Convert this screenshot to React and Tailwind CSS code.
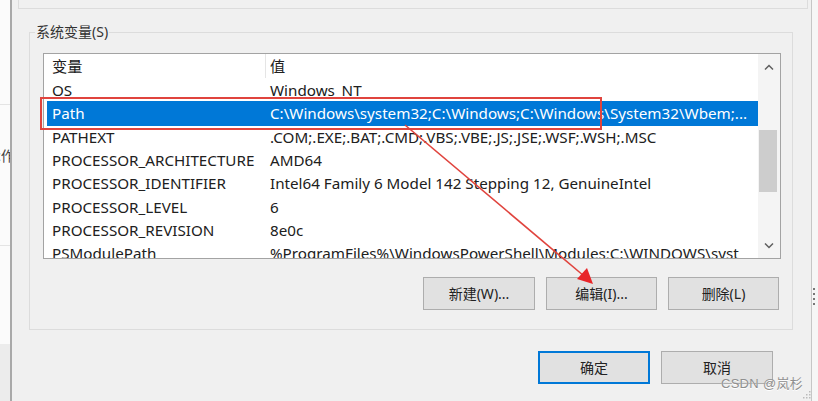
import React from "react";

const rows = [
  ["OS", "Windows_NT"],
  ["Path", "C:\\Windows\\system32;C:\\Windows;C:\\Windows\\System32\\Wbem;..."],
  ["PATHEXT", ".COM;.EXE;.BAT;.CMD;.VBS;.VBE;.JS;.JSE;.WSF;.WSH;.MSC"],
  ["PROCESSOR_ARCHITECTURE", "AMD64"],
  ["PROCESSOR_IDENTIFIER", "Intel64 Family 6 Model 142 Stepping 12, GenuineIntel"],
  ["PROCESSOR_LEVEL", "6"],
  ["PROCESSOR_REVISION", "8e0c"],
  ["PSModulePath", "%ProgramFiles%\\WindowsPowerShell\\Modules;C:\\WINDOWS\\syst"],
];

function Btn({ children, focused, w = "w-[112px]" }) {
  return (
    <button
      className={
        "h-[33px] " +
        w +
        " bg-[#e1e1e1] text-[14px] text-[#222] " +
        (focused ? "border-2 border-[#0078d7]" : "border border-[#adadad]")
      }
    >
      {children}
    </button>
  );
}

export default function App() {
  return (
    <div className="relative flex h-[401px] w-[818px] overflow-hidden bg-[#f0f0f0] font-['Noto_Sans','Noto_Sans_CJK_SC',sans-serif] text-[#1a1a1a]">
      {/* window behind, left edge */}
      <div className="flex w-[12px] shrink-0 flex-col border-r-2 border-[#a9a9a9] bg-[#fbfbfb]">
        <div className="h-[105px] overflow-hidden border-b border-[#e4e4e4]">
          <div className="-ml-[6px] mt-[5px] text-[13px] text-[#3a6fb0]">t</div>
        </div>
        <div className="h-[141px] overflow-hidden border-b border-[#e4e4e4]">
          <div className="-ml-[6px] mt-[40px] whitespace-nowrap text-[14px] text-[#444]">c作</div>
        </div>
        <div className="h-[98px]" />
        <div className="flex-1 bg-[#ececec]" />
      </div>

      {/* dialog */}
      <div className="flex min-w-0 flex-1 flex-col">
        <div className="ml-[6px] mr-[3px] h-[9px] border border-t-0 border-[#dcdcdc]" />

        {/* system variables group */}
        <div className="relative ml-[17px] mr-[18px] mt-[23px] border border-[#dcdcdc] pb-[19px] pl-[13px] pr-[11px] pt-[20px]">
          <div className="absolute -top-[11px] left-[5px] bg-[#f0f0f0] px-[1px] text-[14px] leading-[20px] text-[#333]">
            系统变量(S)
          </div>

          <div className="flex h-[206px] border border-[#a3a3a3] bg-white">
            <div className="min-w-0 flex-1 overflow-hidden pl-[3px] text-[15.2px] text-[#202020]">
              <div className="flex h-[24px] items-center">
                <div className="w-[218px] shrink-0 pl-[5px]">变量</div>
                <div className="h-full border-l border-[#e5e5e5] pl-[4px] leading-[24px]">值</div>
              </div>
              <div className="pt-[1px]">
                {rows.map(([name, value], i) => (
                  <div
                    key={name}
                    className={
                      "flex h-[23.3px] items-center whitespace-nowrap " +
                      (i === 1 ? "-mt-[1px] h-[24.3px] bg-[#0078d7] text-white" : "")
                    }
                  >
                    <div className="w-[218px] shrink-0 pl-[5px]">{name}</div>
                    <div className="pl-[5px]">{value}</div>
                  </div>
                ))}
              </div>
            </div>

            {/* scrollbar */}
            <div className="flex w-[22px] shrink-0 flex-col bg-[#f4f4f4]">
              <div className="flex h-[26px] items-center justify-center">
                <svg width="10" height="6" viewBox="0 0 10 6">
                  <path d="M1 5.5 L5 1.5 L9 5.5" fill="none" stroke="#606060" strokeWidth="1.5" />
                </svg>
              </div>
              <div className="ml-[1px] mr-[3px] mt-[50px] h-[62px] bg-[#cdcdcd]" />
              <div className="flex-1" />
              <div className="flex h-[24px] items-center justify-center">
                <svg width="10" height="6" viewBox="0 0 10 6">
                  <path d="M1 0.5 L5 4.5 L9 0.5" fill="none" stroke="#606060" strokeWidth="1.5" />
                </svg>
              </div>
            </div>
          </div>

          <div className="mr-[2px] mt-[18px] flex justify-end gap-[11px]">
            <Btn>新建(W)...</Btn>
            <Btn w="w-[111px]">编辑(I)...</Btn>
            <Btn w="w-[111px]">删除(L)</Btn>
          </div>
        </div>

        <div className="mr-[38px] mt-[21px] flex justify-end gap-[11px]">
          <Btn focused>确定</Btn>
          <Btn>取消</Btn>
        </div>
      </div>

      {/* right edge */}
      <div className="flex w-[7px] shrink-0 flex-col border-l border-[#c6c6c6] bg-[#f6f6f6]">
        <div className="mt-[288px] flex flex-col gap-[3px] pl-[1px]">
          <div className="h-[2px] w-[2px] bg-[#777]" />
          <div className="h-[2px] w-[2px] bg-[#777]" />
          <div className="h-[2px] w-[2px] bg-[#777]" />
          <div className="h-[2px] w-[2px] bg-[#777]" />
        </div>
      </div>

      {/* annotation overlay */}
      <svg className="pointer-events-none absolute left-0 top-0" width="818" height="401" viewBox="0 0 818 401">
        <rect x="41" y="98" width="560" height="31" fill="none" stroke="#e0443e" strokeWidth="2" />
        <line x1="405" y1="125" x2="584" y2="276" stroke="#e0443e" strokeWidth="1.6" />
        <polygon points="593,284 577,279 587,268" fill="#e8262a" />
      </svg>

      {/* resize grip */}
      <svg className="pointer-events-none absolute bottom-[1px] right-[6px]" width="10" height="10" viewBox="0 0 10 10">
        <rect x="7" y="1" width="1.5" height="1.5" fill="#bbb" />
        <rect x="4" y="4" width="1.5" height="1.5" fill="#bbb" />
        <rect x="7" y="4" width="1.5" height="1.5" fill="#bbb" />
        <rect x="1" y="7" width="1.5" height="1.5" fill="#bbb" />
        <rect x="4" y="7" width="1.5" height="1.5" fill="#bbb" />
        <rect x="7" y="7" width="1.5" height="1.5" fill="#bbb" />
      </svg>

      {/* watermark */}
      <div className="pointer-events-none absolute bottom-[8px] right-[15px] font-['Liberation_Sans','Noto_Sans_CJK_SC',sans-serif] text-[13px] tracking-[0.3px] text-[#8f8f8f] [text-shadow:0_1px_0_#ffffff]">
        CSDN @岚杉
      </div>
    </div>
  );
}
